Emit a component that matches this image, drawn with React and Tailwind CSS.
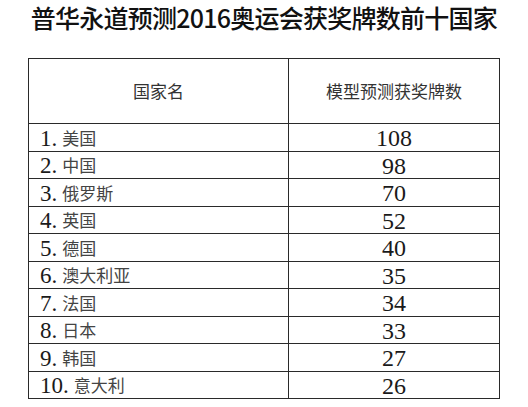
import React from "react";

const rows = [
  ["1.", "美国", "108"],
  ["2.", "中国", "98"],
  ["3.", "俄罗斯", "70"],
  ["4.", "英国", "52"],
  ["5.", "德国", "40"],
  ["6.", "澳大利亚", "35"],
  ["7.", "法国", "34"],
  ["8.", "日本", "33"],
  ["9.", "韩国", "27"],
  ["10.", "意大利", "26"],
];

const cjk = { fontFamily: '"Noto Sans CJK SC", "Noto Sans", sans-serif' };
const serif = { fontFamily: '"Liberation Serif", "DejaVu Serif", serif' };

export default function App() {
  return (
    <div className="w-[528px] h-[407px] bg-white">
      <h1
        className="pt-[1px] h-[58px] text-center text-[25px] font-medium text-[#111] leading-[32px] tracking-[-0.75px]"
        style={cjk}
      >
        普华永道预测2016奥运会获奖牌数前十国家
      </h1>
      <table className="ml-[28px] w-[472px] border-collapse border-[1.5px] border-[#2a2a2a] table-fixed">
        <colgroup>
          <col className="w-[260px]" />
          <col />
        </colgroup>
        <thead>
          <tr className="h-[65px]">
            <th className="border-[1.5px] border-[#2a2a2a] font-normal text-[17px] text-[#333] text-center" style={cjk}>
              国家名
            </th>
            <th className="border-[1.5px] border-[#2a2a2a] font-normal text-[17px] text-[#333] text-center" style={cjk}>
              模型预测获奖牌数
            </th>
          </tr>
        </thead>
        <tbody>
          {rows.map(([n, name, v]) => (
            <tr key={n} className="h-[27.5px]">
              <td className="border-[1.5px] border-[#2a2a2a] pl-[11px] p-0 leading-none whitespace-nowrap">
                <span className="inline-block translate-y-[1px] text-[23px] text-[#1a1a1a]" style={serif}>{n}</span>
                <span className="ml-[5px] text-[17px] text-[#444]" style={cjk}>{name}</span>
              </td>
              <td className="border-[1.5px] border-[#2a2a2a] p-0 text-center leading-none">
                <span className="inline-block translate-y-[1px] text-[24px] text-[#1a1a1a]" style={serif}>{v}</span>
              </td>
            </tr>
          ))}
        </tbody>
      </table>
    </div>
  );
}
